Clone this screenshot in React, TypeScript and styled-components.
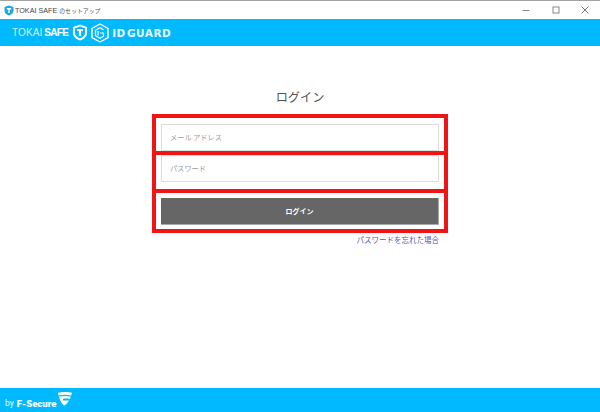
import styled, { createGlobalStyle } from 'styled-components';

const GlobalStyle = createGlobalStyle`
  html, body {
    margin: 0;
    padding: 0;
    background: #fff;
  }
  body {
    font-family: "Roboto", "Noto Sans CJK JP", sans-serif;
  }
`;

const Window = styled.div`
  width: 600px;
  height: 412px;
  display: flex;
  flex-direction: column;
  overflow: hidden;
  background: #fff;
`;

const TitleBar = styled.div`
  height: 18px;
  border-top: 1px solid #a3a3a3;
  display: flex;
  align-items: center;
  padding-left: 4px;
  background: #fff;
`;

const TitleText = styled.span`
  margin-left: 1px;
  font-family: "Liberation Sans", sans-serif;
  font-size: 7.2px;
  color: #444;
  white-space: nowrap;
`;

const TitleKana = styled.span`
  margin-left: 2px;
  font-family: "Noto Sans CJK JP", sans-serif;
  font-size: 5.9px;
  color: #555;
  white-space: nowrap;
`;

const WindowControls = styled.div`
  margin-left: auto;
  display: flex;
  align-items: center;
`;

const WindowButton = styled.div`
  width: 29.5px;
  height: 18px;
  display: flex;
  align-items: center;
  justify-content: center;
`;

const Header = styled.header`
  height: 27px;
  background: #00b9ff;
  display: flex;
  align-items: center;
  padding-left: 12px;
  color: #fff;
`;

const BrandLight = styled.span`
  font-family: "Liberation Sans", sans-serif;
  font-size: 10px;
  letter-spacing: 0.1px;
  color: #d2f1ff;
  white-space: nowrap;
`;

const BrandBold = styled(BrandLight)`
  font-weight: 700;
  color: #fff;
  margin-left: 2px;
  letter-spacing: -0.7px;
`;

const ShieldMark = styled.svg`
  margin-left: 4px;
`;

const HexMark = styled.svg`
  margin-left: 3px;
`;

const GuardText = styled.span`
  margin-left: 3px;
  font-family: "DejaVu Sans", sans-serif;
  font-size: 10.5px;
  font-weight: 700;
  letter-spacing: 0.5px;
  word-spacing: -3px;
  color: #e6f8ff;
  white-space: nowrap;
`;

const Main = styled.main`
  flex: 1;
  display: flex;
  flex-direction: column;
  align-items: center;
  padding-top: 41px;
`;

const Heading = styled.h1`
  margin: 0 0 6px;
  height: 21px;
  line-height: 21px;
  font-family: "Noto Sans CJK JP", sans-serif;
  font-size: 12.2px;
  font-weight: 400;
  color: #555;
`;

const Form = styled.form`
  width: 296px;
  display: flex;
  flex-direction: column;
`;

const Highlight = styled.div<{ $height: number; $top: number }>`
  box-sizing: border-box;
  height: ${(p) => p.$height}px;
  border: 4px solid #f01414;
  margin-top: -4px;
  padding: ${(p) => p.$top}px 5px 0;
  &:first-child {
    margin-top: 0;
  }
`;

const Field = styled.div`
  box-sizing: border-box;
  height: 27px;
  border: 1px solid #dcdcdc;
  background: #fff;
  display: flex;
  align-items: center;
  padding: 0 0 2px 8px;
  font-family: "Noto Sans CJK JP", sans-serif;
  font-size: 7.2px;
  color: #9a9a9a;
`;

const SubmitButton = styled.button`
  display: block;
  box-sizing: border-box;
  width: 278px;
  height: 27px;
  padding: 0;
  border: 0;
  border-bottom: 1px solid #a8a8a8;
  border-right: 1px solid #a8a8a8;
  background: #666;
  color: #fff;
  font-family: "Noto Sans CJK JP", sans-serif;
  font-size: 7px;
  font-weight: 700;
`;

const ForgotLink = styled.a`
  align-self: flex-end;
  margin: 0 9px 0 0;
  font-family: "Noto Sans CJK JP", sans-serif;
  font-size: 7.5px;
  line-height: 13px;
  color: #5a55b8;
  text-decoration: none;
`;

const Footer = styled.footer`
  box-sizing: border-box;
  height: 24px;
  background: #00b9ff;
  display: flex;
  align-items: center;
  padding: 6px 0 0 5px;
  color: #fff;
`;

const ByText = styled.span`
  font-family: "Roboto", sans-serif;
  font-size: 8.5px;
  margin-right: 3px;
  color: #eafaff;
`;

const VendorText = styled.span`
  font-family: "Roboto", sans-serif;
  font-size: 9.5px;
  font-weight: 900;
`;

const VendorMark = styled.svg`
  margin-left: 1px;
  margin-top: -8px;
`;

const App = () => {
  return (
    <>
      <GlobalStyle />
      <Window>
        <TitleBar>
          <svg width="10" height="11" viewBox="0 0 10 11">
            <path d="M5 .5 9.500 2v3.500C9.500 8 7.500 9.800 5 10.500 2.500 9.800.5 8 .5 5.500V2z" fill="#1aa7e8" />
            <path d="M2.800 3h4.400v1.400H5.700V8H4.300V4.400H2.800z" fill="#fff" />
          </svg>
          <TitleText>TOKAI SAFE</TitleText>
          <TitleKana>のセットアップ</TitleKana>
          <WindowControls>
            <WindowButton>
              <svg width="8" height="8" viewBox="0 0 8 8">
                <path d="M.5 4.500h7" stroke="#888" strokeWidth="1" />
              </svg>
            </WindowButton>
            <WindowButton>
              <svg width="8" height="8" viewBox="0 0 8 8">
                <rect x="1" y="1" width="6" height="6" fill="none" stroke="#888" />
              </svg>
            </WindowButton>
            <WindowButton>
              <svg width="8" height="8" viewBox="0 0 8 8">
                <path d="M.5.5l7 7M7.500.5l-7 7" stroke="#666" strokeWidth="0.9" fill="none" />
              </svg>
            </WindowButton>
          </WindowControls>
        </TitleBar>
        <Header>
          <BrandLight>TOKAI</BrandLight>
          <BrandBold>SAFE</BrandBold>
          <ShieldMark width="16" height="17" viewBox="0 0 15 17">
            <path d="M7.500.5 14.500 3v6c0 3.500-3 6-7 7.500C3.500 15 .5 12.500.5 9V3z" fill="#fff" />
            <path d="M7.500 2.500 12.500 4.300V9c0 2.500-2.200 4.300-5 5.400C4.700 13.300 2.500 11.500 2.500 9V4.300z" fill="#00b9ff" />
            <path d="M4.500 5h6v2H8.600v5H6.400V7H4.500z" fill="#fff" />
          </ShieldMark>
          <HexMark width="18" height="20" viewBox="0 0 18 20">
            <path d="M9 1 17 5.500v9L9 19 1 14.500v-9z" fill="none" stroke="#fff" strokeWidth="1.400" />
            <path d="M12.500 6.800 9 4.800 4.500 7.300v5.400L9 15.200l3.500-2V10H9" fill="none" stroke="#fff" strokeWidth="1.200" />
            <path d="M7 8v4.500" stroke="#fff" strokeWidth="1.200" />
          </HexMark>
          <GuardText>ID GUARD</GuardText>
        </Header>
        <Main>
          <Heading>ログイン</Heading>
          <Form>
            <Highlight $height={41} $top={6}>
              <Field>メール アドレス</Field>
            </Highlight>
            <Highlight $height={42} $top={0}>
              <Field>パスワード</Field>
            </Highlight>
            <Highlight $height={44} $top={5}>
              <SubmitButton type="button">ログイン</SubmitButton>
            </Highlight>
            <ForgotLink href="#">パスワードを忘れた場合</ForgotLink>
          </Form>
        </Main>
        <Footer>
          <ByText>by</ByText>
          <VendorText>F-Secure</VendorText>
          <VendorMark width="16" height="16" viewBox="0 0 18 17">
            <path d="M1 1.500C6 .5 12 .5 17 1.500L16 4.500C11.500 3.500 6 3.500 1.800 4.500z" fill="#fff" />
            <path d="M2.300 5.800C7 4.800 11 4.800 15.500 5.800L14.500 8.500C11 7.800 9 7.800 6.500 8.500L7 10.500C9 10 11 10 13.500 10.500 12 13 10 15 8 16 5 13.500 3 10 2.300 5.800z" fill="#fff" />
          </VendorMark>
        </Footer>
      </Window>
    </>
  );
};

export default App;
